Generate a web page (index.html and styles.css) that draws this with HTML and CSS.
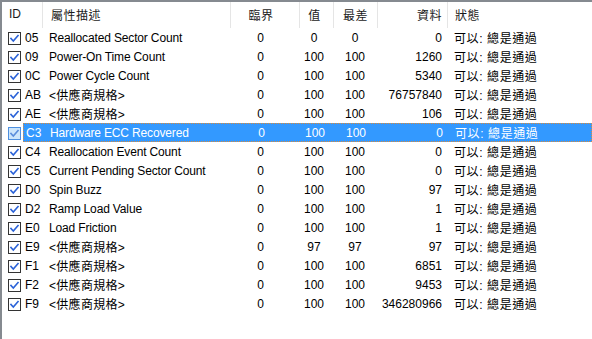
FILE: index.html
```html
<!DOCTYPE html>
<html lang="zh-Hant">
<head>
<meta charset="utf-8">
<link rel="stylesheet" href="styles.css">
</head>
<body>
<div class="list">
  <div class="head">
    <div class="h h-id">ID</div>
    <div class="h h-name cjk">屬性描述</div>
    <div class="h h-thr cjk">臨界</div>
    <div class="h h-val cjk">值</div>
    <div class="h h-worst cjk">最差</div>
    <div class="h h-data cjk">資料</div>
    <div class="h h-status cjk">狀態</div>
  </div>
  <div class="rows">
    <div class="row"><span class="cb"><svg viewBox="0 0 13 13" width="13" height="13"><rect x="0.5" y="0.5" width="12" height="12" class="box"/><path d="M3 6.5 L5.3 9 L10 3.6" class="chk"/></svg></span><div class="cells"><span class="c-id">05</span><span class="c-name">Reallocated Sector Count</span><span class="c-thr">0</span><span class="c-val">0</span><span class="c-worst">0</span><span class="c-data">0</span><span class="c-status">可以: 總是通過</span></div></div>
    <div class="row"><span class="cb"><svg viewBox="0 0 13 13" width="13" height="13"><rect x="0.5" y="0.5" width="12" height="12" class="box"/><path d="M3 6.5 L5.3 9 L10 3.6" class="chk"/></svg></span><div class="cells"><span class="c-id">09</span><span class="c-name">Power-On Time Count</span><span class="c-thr">0</span><span class="c-val">100</span><span class="c-worst">100</span><span class="c-data">1260</span><span class="c-status">可以: 總是通過</span></div></div>
    <div class="row"><span class="cb"><svg viewBox="0 0 13 13" width="13" height="13"><rect x="0.5" y="0.5" width="12" height="12" class="box"/><path d="M3 6.5 L5.3 9 L10 3.6" class="chk"/></svg></span><div class="cells"><span class="c-id">0C</span><span class="c-name">Power Cycle Count</span><span class="c-thr">0</span><span class="c-val">100</span><span class="c-worst">100</span><span class="c-data">5340</span><span class="c-status">可以: 總是通過</span></div></div>
    <div class="row"><span class="cb"><svg viewBox="0 0 13 13" width="13" height="13"><rect x="0.5" y="0.5" width="12" height="12" class="box"/><path d="M3 6.5 L5.3 9 L10 3.6" class="chk"/></svg></span><div class="cells"><span class="c-id">AB</span><span class="c-name vendor">&lt;供應商規格&gt;</span><span class="c-thr">0</span><span class="c-val">100</span><span class="c-worst">100</span><span class="c-data">76757840</span><span class="c-status">可以: 總是通過</span></div></div>
    <div class="row"><span class="cb"><svg viewBox="0 0 13 13" width="13" height="13"><rect x="0.5" y="0.5" width="12" height="12" class="box"/><path d="M3 6.5 L5.3 9 L10 3.6" class="chk"/></svg></span><div class="cells"><span class="c-id">AE</span><span class="c-name vendor">&lt;供應商規格&gt;</span><span class="c-thr">0</span><span class="c-val">100</span><span class="c-worst">100</span><span class="c-data">106</span><span class="c-status">可以: 總是通過</span></div></div>
    <div class="row selected"><span class="cb"><svg viewBox="0 0 13 13" width="13" height="13"><rect x="0.5" y="0.5" width="12" height="12" class="box"/><path d="M3 6.5 L5.3 9 L10 3.6" class="chk"/></svg></span><div class="cells"><span class="c-id">C3</span><span class="c-name">Hardware ECC Recovered</span><span class="c-thr">0</span><span class="c-val">100</span><span class="c-worst">100</span><span class="c-data">0</span><span class="c-status">可以: 總是通過</span></div></div>
    <div class="row"><span class="cb"><svg viewBox="0 0 13 13" width="13" height="13"><rect x="0.5" y="0.5" width="12" height="12" class="box"/><path d="M3 6.5 L5.3 9 L10 3.6" class="chk"/></svg></span><div class="cells"><span class="c-id">C4</span><span class="c-name">Reallocation Event Count</span><span class="c-thr">0</span><span class="c-val">100</span><span class="c-worst">100</span><span class="c-data">0</span><span class="c-status">可以: 總是通過</span></div></div>
    <div class="row"><span class="cb"><svg viewBox="0 0 13 13" width="13" height="13"><rect x="0.5" y="0.5" width="12" height="12" class="box"/><path d="M3 6.5 L5.3 9 L10 3.6" class="chk"/></svg></span><div class="cells"><span class="c-id">C5</span><span class="c-name">Current Pending Sector Count</span><span class="c-thr">0</span><span class="c-val">100</span><span class="c-worst">100</span><span class="c-data">0</span><span class="c-status">可以: 總是通過</span></div></div>
    <div class="row"><span class="cb"><svg viewBox="0 0 13 13" width="13" height="13"><rect x="0.5" y="0.5" width="12" height="12" class="box"/><path d="M3 6.5 L5.3 9 L10 3.6" class="chk"/></svg></span><div class="cells"><span class="c-id">D0</span><span class="c-name">Spin Buzz</span><span class="c-thr">0</span><span class="c-val">100</span><span class="c-worst">100</span><span class="c-data">97</span><span class="c-status">可以: 總是通過</span></div></div>
    <div class="row"><span class="cb"><svg viewBox="0 0 13 13" width="13" height="13"><rect x="0.5" y="0.5" width="12" height="12" class="box"/><path d="M3 6.5 L5.3 9 L10 3.6" class="chk"/></svg></span><div class="cells"><span class="c-id">D2</span><span class="c-name">Ramp Load Value</span><span class="c-thr">0</span><span class="c-val">100</span><span class="c-worst">100</span><span class="c-data">1</span><span class="c-status">可以: 總是通過</span></div></div>
    <div class="row"><span class="cb"><svg viewBox="0 0 13 13" width="13" height="13"><rect x="0.5" y="0.5" width="12" height="12" class="box"/><path d="M3 6.5 L5.3 9 L10 3.6" class="chk"/></svg></span><div class="cells"><span class="c-id">E0</span><span class="c-name">Load Friction</span><span class="c-thr">0</span><span class="c-val">100</span><span class="c-worst">100</span><span class="c-data">1</span><span class="c-status">可以: 總是通過</span></div></div>
    <div class="row"><span class="cb"><svg viewBox="0 0 13 13" width="13" height="13"><rect x="0.5" y="0.5" width="12" height="12" class="box"/><path d="M3 6.5 L5.3 9 L10 3.6" class="chk"/></svg></span><div class="cells"><span class="c-id">E9</span><span class="c-name vendor">&lt;供應商規格&gt;</span><span class="c-thr">0</span><span class="c-val">97</span><span class="c-worst">97</span><span class="c-data">97</span><span class="c-status">可以: 總是通過</span></div></div>
    <div class="row"><span class="cb"><svg viewBox="0 0 13 13" width="13" height="13"><rect x="0.5" y="0.5" width="12" height="12" class="box"/><path d="M3 6.5 L5.3 9 L10 3.6" class="chk"/></svg></span><div class="cells"><span class="c-id">F1</span><span class="c-name vendor">&lt;供應商規格&gt;</span><span class="c-thr">0</span><span class="c-val">100</span><span class="c-worst">100</span><span class="c-data">6851</span><span class="c-status">可以: 總是通過</span></div></div>
    <div class="row"><span class="cb"><svg viewBox="0 0 13 13" width="13" height="13"><rect x="0.5" y="0.5" width="12" height="12" class="box"/><path d="M3 6.5 L5.3 9 L10 3.6" class="chk"/></svg></span><div class="cells"><span class="c-id">F2</span><span class="c-name vendor">&lt;供應商規格&gt;</span><span class="c-thr">0</span><span class="c-val">100</span><span class="c-worst">100</span><span class="c-data">9453</span><span class="c-status">可以: 總是通過</span></div></div>
    <div class="row"><span class="cb"><svg viewBox="0 0 13 13" width="13" height="13"><rect x="0.5" y="0.5" width="12" height="12" class="box"/><path d="M3 6.5 L5.3 9 L10 3.6" class="chk"/></svg></span><div class="cells"><span class="c-id">F9</span><span class="c-name vendor">&lt;供應商規格&gt;</span><span class="c-thr">0</span><span class="c-val">100</span><span class="c-worst">100</span><span class="c-data">346280966</span><span class="c-status">可以: 總是通過</span></div></div>
  </div>
</div>
</body>
</html>
```

FILE: styles.css
```css
html, body {
  margin: 0;
  padding: 0;
  background: #fff;
}
body {
  font-family: "Liberation Sans", "Noto Sans CJK TC", sans-serif;
  font-size: 12px;
  color: #000;
}
.list {
  width: 592px;
  height: 339px;
  box-sizing: border-box;
  border-top: 2px solid #858a90;
  border-left: 2px solid #858a90;
  overflow: hidden;
}
.head {
  display: grid;
  grid-template-columns: 41px 188px 69px 34px 44px 70px 1fr;
  height: 26px;
}
.h {
  display: flex;
  align-items: center;
  border-right: 1px solid #e5e5e5;
  box-sizing: border-box;
  color: #1a1a1a;
  white-space: nowrap;
  padding-bottom: 2px;
}
.cjk { letter-spacing: 0.5px; }
.h-id { padding-left: 7px; }
.h-name { padding-left: 8px; }
.h-thr { justify-content: center; padding-right: 8px; }
.h-val { justify-content: center; padding-right: 4px; }
.h-worst { justify-content: center; }
.h-data { justify-content: flex-end; padding-right: 5px; }
.h-status { padding-left: 7px; border-right: none; }

.row {
  display: flex;
  height: 19px;
}
.cb {
  width: 21px;
  flex: none;
  display: flex;
  align-items: center;
  padding-left: 6px;
  box-sizing: border-box;
  padding-top: 1px;
}
.cb svg { display: block; }
.box { fill: #fff; stroke: #333; stroke-width: 1; }
.chk { fill: none; stroke: #2a62d8; stroke-width: 1.6; stroke-linecap: square; }
.cells {
  flex: 1;
  display: grid;
  grid-template-columns: 19px 188px 69px 34px 44px 70px 1fr;
  align-items: center;
  white-space: nowrap;
  box-sizing: border-box;
}
.cells > span { display: block; }
.c-id { padding-left: 2px; }
.c-name { padding-left: 7px; letter-spacing: -0.15px; }
.c-name.vendor { letter-spacing: 0.3px; }
.c-thr { text-align: center; padding-right: 8px; }
.c-val { text-align: center; padding-right: 4px; }
.c-worst { text-align: center; }
.c-data { text-align: right; padding-right: 5px; }
.c-status { padding-left: 7px; letter-spacing: 0.6px; }

.selected .cells {
  background: #3399ff;
  color: #fff;
  border: 1px dotted #d88a3c;
}
.selected .box { fill: #cde6fb; stroke: #4d8fdf; }
.selected .chk { stroke: #5a8ddb; }
```
